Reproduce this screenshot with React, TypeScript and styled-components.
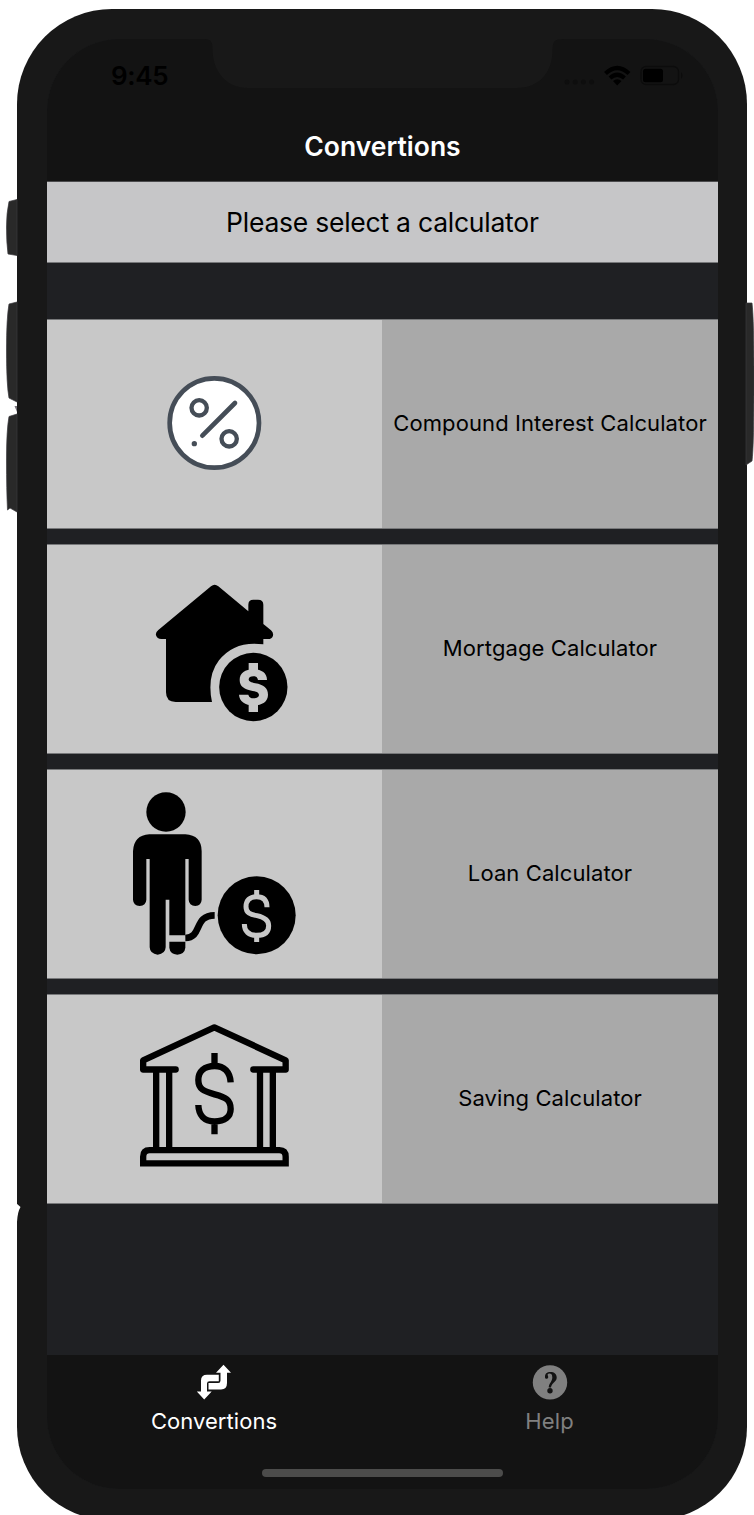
import React from "react";
import styled, { createGlobalStyle } from "styled-components";

const GlobalStyle = createGlobalStyle`
  html, body { margin: 0; height: 1515px; overflow: hidden; background: #fff; }
  * { box-sizing: border-box; }
`;

const Stage = styled.main`
  position: relative;
  width: 754px;
  height: 1515px;
  overflow: hidden;
  padding: 9px 7px 0 17px;
  font-family: Inter, "Liberation Sans", sans-serif;
`;

const SideButtons = styled.svg`
  position: absolute;
  inset: 0;
  pointer-events: none;
`;

const Body = styled.div`
  width: 730px;
  height: 1511px;
  padding: 30px 29px 31px 30px;
  border-radius: 95px 95px 93px 93px;
  background: #181818;
`;

const Screen = styled.div`
  position: relative;
  width: 671px;
  height: 1450px;
  display: flex;
  flex-direction: column;
  overflow: hidden;
  border-radius: 72px;
  background: #1f2023;
`;

const Notch = styled.svg`
  position: absolute;
  top: 0;
  left: 157px;
`;

const StatusBar = styled.div`
  height: 72px;
  flex: none;
  display: flex;
  justify-content: space-between;
  padding: 22px 34px 0 64px;
  background: #131313;
`;

const Clock = styled.span`
  font-size: 26px;
  font-weight: 600;
  line-height: 30px;
  letter-spacing: -0.3px;
  color: #000;
`;

const NavBar = styled.header`
  height: 70px;
  flex: none;
  padding-top: 18px;
  text-align: center;
  background: #131313;
`;

const Title = styled.h1`
  margin: 0;
  font-size: 26.5px;
  font-weight: 600;
  line-height: 34px;
  color: #fff;
`;

const Banner = styled.div`
  height: 82px;
  flex: none;
  display: flex;
  align-items: center;
  justify-content: center;
  border-top: 1px solid #4b4b4d;
  border-bottom: 1px solid #77787a;
  font-size: 26.5px;
  color: #000;
  background: #c6c6c8;
`;

const CardList = styled.section`
  flex: 1;
  display: flex;
  flex-direction: column;
  gap: 15px;
  padding-top: 56px;
`;

const Card = styled.article`
  height: 210px;
  display: grid;
  grid-template-columns: 335px 1fr;
  border-top: 1px solid #77787a;
  border-bottom: 1px solid #77787a;
`;

const CardPicture = styled.div`
  display: flex;
  align-items: flex-start;
  justify-content: center;
  padding-top: 18px;
  background: #c8c8c8;
`;

const CardLabel = styled.div`
  display: flex;
  align-items: center;
  justify-content: center;
  padding-bottom: 2px;
  white-space: nowrap;
  font-size: 22px;
  color: #000;
  background: #a9a9a9;
`;

const TabBar = styled.nav`
  position: relative;
  height: 134px;
  flex: none;
  display: grid;
  grid-template-columns: 334px 1fr;
  background: #131313;
`;

const Tab = styled.div<{ $active?: boolean }>`
  display: flex;
  flex-direction: column;
  align-items: center;
  padding-top: 9px;
  gap: 7px;
  font-size: 22px;
  line-height: 28px;
  color: ${(p) => (p.$active ? "#fff" : "#808080")};
`;

const HomeIndicator = styled.div`
  position: absolute;
  left: 215px;
  bottom: 12px;
  width: 241px;
  height: 8px;
  border-radius: 4px;
  background: #4c4c4b;
`;

const Label = styled.span<{ $spacing?: number }>`
  letter-spacing: ${(p) => p.$spacing ?? 0}px;
  margin-right: ${(p) => -(p.$spacing ?? 0)}px;
`;

const PercentIcon = () => (
  <svg width="171" height="171" viewBox="-63 -66 513 513" fill="none" stroke="#454d57">
    <circle cx="193" cy="189" r="134" fill="#fff" strokeWidth="14" />
    <circle cx="147.500" cy="143.500" r="23" strokeWidth="13" />
    <circle cx="237.500" cy="236.500" r="23" strokeWidth="13" />
    <path d="M157 227 255 129" strokeWidth="14" strokeLinecap="round" />
    <circle cx="133" cy="251" r="8" fill="#454d57" stroke="none" />
  </svg>
);

const MortgageIcon = () => (
  <svg width="171" height="171" viewBox="-33 -21 513 513">
    <path d="M213 49Q224 39 235 49L325 124V104Q325 89 340 89H354Q370 89 370 104V162L393 181Q401 188 399 197Q396 207 384 207H370V223Q284 211 237 271Q200 319 216 396H107Q78 396 78 367V207H64Q51 207 48 196Q46 187 55 180Z" />
    <circle cx="340" cy="351" r="102.500" />
    <path
      d="M381 330H354C352 321 347 319 340 319C332 319 326 322 326 328C326 335 334 337 346 340C371 344 384 354 384 374C384 395 366 406 341 406C315 406 298 394 297 374H325C327 382 332 385 341 385C351 385 357 381 357 375C357 368 350 365 338 363C313 358 299 350 299 330C299 309 316 298 340 298C364 298 381 309 381 330Z"
      fill="#c8c8c8"
    />
    <path d="M326 279H354V301H326ZM326 403H354V426H326Z" fill="#c8c8c8" />
  </svg>
);

const LoanIcon = () => (
  <svg width="171" height="171" viewBox="27 24 513 513">
    <circle cx="138" cy="96" r="59" />
    <path d="M88 163H196Q245 166 245 214V359Q244 377 226 378Q207 377 206 359V237H196V466H148V359H137V502Q136 522 113 524Q90 522 89 502V237H79V359Q78 377 59 378Q40 377 39 359V214Q41 166 88 163Z" />
    <path d="M148 485H196V503Q194 522 172 524Q150 522 148 503Z" />
    <path d="M196 474C248 473 220 406 284 406" fill="none" stroke="#000" strokeWidth="20" />
    <circle cx="410" cy="406" r="117" />
    <path
      d="M441 382C441 360 430 350 410 350C389 350 378 361 378 380C378 398 390 403 411 407C434 412 446 420 446 437C446 457 432 466 410 466C387 466 373 455 373 432M410 330V350M410 466V486"
      fill="none"
      stroke="#c8c8c8"
      strokeWidth="15"
    />
  </svg>
);

const BankIcon = () => (
  <svg width="171" height="171" viewBox="12 9 513 513" fill="none" stroke="#000" strokeWidth="19">
    <path d="M152 178.500H54.500V151L268 52L482 151V178.500H385" strokeLinecap="round" strokeLinejoin="round" />
    <path d="M93.500 180V420M132.500 180V420M405 180V420M443.500 180V420" />
    <path d="M54.500 460V440Q54.500 420.500 74 420.500H463Q482 421 482 440V460Z" />
    <path d="M317 217C315 186 298 168 269 168C239 168 220 184 220 210C220 238 237 244 269 253C303 262 317 270 317 297C317 320 300 334 269 334C237 334 221 316 220 285M268.500 129V168M268.500 334V373" />
  </svg>
);

const StatusIcons = () => (
  <svg width="124" height="30" viewBox="560 61 124 30">
    <g fill="#0e0e0e">
      <circle cx="567" cy="82" r="2.500" />
      <circle cx="575.300" cy="82" r="2.500" />
      <circle cx="583.400" cy="82" r="2.500" />
      <circle cx="591.600" cy="82" r="2.500" />
    </g>
    <g fill="none" stroke="#000" strokeWidth="4.200">
      <path d="M605.500 73.500Q617.200 62.500 629 73.500" />
      <path d="M610 78Q617.200 71.500 624.500 78" />
    </g>
    <path d="M613 81Q617.200 77.500 621.500 81L617.200 85.500Z" />
    <rect x="641" y="66.500" width="37.500" height="18" rx="5" fill="none" stroke="#0c0c0c" strokeWidth="1.300" />
    <rect x="643" y="68.700" width="20" height="13.600" rx="2.500" />
    <path d="M681 72Q684 75.500 681 79Z" fill="#0c0c0c" />
  </svg>
);

const ExchangeIcon = () => (
  <svg width="36" height="36" viewBox="0 0 36 36" fill="currentColor">
    <path d="M27.500 .7 35 8.700H31V19Q31 25.500 25 25.500H12.500V19H22.200Q24.500 19 24.500 16.500V8.700H20Z" />
    <path d="M8.200 35.500.8 27.500H5V16.500Q5 10.700 11 10.700H22.800V17.200H13.500Q11 17.200 11 19.500V27.500H15.700Z" />
  </svg>
);

const HelpIcon = () => (
  <svg width="36" height="36" viewBox="0 0 36 36">
    <circle cx="18" cy="18.400" r="17.200" fill="currentColor" />
    <path
      d="M13 13.500C12.700 9.500 15 8 18.300 8C22.300 8 24.700 10 24.700 13.500C24.700 17 22 18 20.300 20.300Q19 22 19 23.500H16.800C16.500 20 20.300 17.500 20.300 13.500C20.300 10.500 19 9.600 17.500 9.600C15.500 9.600 15.300 10.700 16 12C17.300 14.700 13.300 16 13 13.500Z"
      fill="#131313"
    />
    <circle cx="18" cy="26.700" r="2.700" fill="#131313" />
  </svg>
);

const calculators = [
  { name: "Compound Interest Calculator", Icon: PercentIcon },
  { name: "Mortgage Calculator", Icon: MortgageIcon },
  { name: "Loan Calculator", Icon: LoanIcon },
  { name: "Saving Calculator", Icon: BankIcon },
];

export default function App() {
  return (
    <Stage>
      <GlobalStyle />
      <Body>
        <Screen>
          <StatusBar>
            <Clock>9:45</Clock>
            <StatusIcons />
          </StatusBar>
          <Notch width="360" height="50" viewBox="204 39 360 50">
            <path d="M204 39C211 39 212.500 42 212.500 49C212.500 71 226 88 248 88H516C540 88 552.500 72 552.500 50C552.500 42 554 39 564 39Z" fill="#181818" />
          </Notch>
          <NavBar>
            <Title>Convertions</Title>
          </NavBar>
          <Banner>
            <Label $spacing={-0.24}>Please select a calculator</Label>
          </Banner>
          <CardList>
            {calculators.map(({ name, Icon }) => (
              <Card key={name}>
                <CardPicture>
                  <Icon />
                </CardPicture>
                <CardLabel>
                  <Label $spacing={0.1}>{name}</Label>
                </CardLabel>
              </Card>
            ))}
          </CardList>
          <TabBar>
            <Tab $active>
              <ExchangeIcon />
              <Label $spacing={0.05}>Convertions</Label>
            </Tab>
            <Tab>
              <HelpIcon />
              <Label $spacing={0.1}>Help</Label>
            </Tab>
            <HomeIndicator />
          </TabBar>
        </Screen>
      </Body>
      <SideButtons width="754" height="1515" viewBox="0 0 754 1515">
        <g fill="#292929" stroke="#3b393d" strokeWidth=".7">
          <path d="M17 199.500 9 201.500Q6.500 213 6.500 227Q6.500 243 8 254L17 255.500Z" />
          <path d="M17 302 9 304Q6.500 318 6.500 350Q6.500 385 9 398L17 402Z" />
          <path d="M17 414 9 416.500Q6.500 430 6.500 460Q6.500 490 7.500 510L10 508 17 512Z" />
          <path d="M746 303H752Q754 320 754 380Q754 445 752 461L746 465Z" />
        </g>
        <path d="M14.500 406H17V412Z" fill="#77737b" />
        <path d="M16 1203 20.500 1207Q17.500 1212 17 1222H16Z" fill="#fff" />
      </SideButtons>
    </Stage>
  );
}
